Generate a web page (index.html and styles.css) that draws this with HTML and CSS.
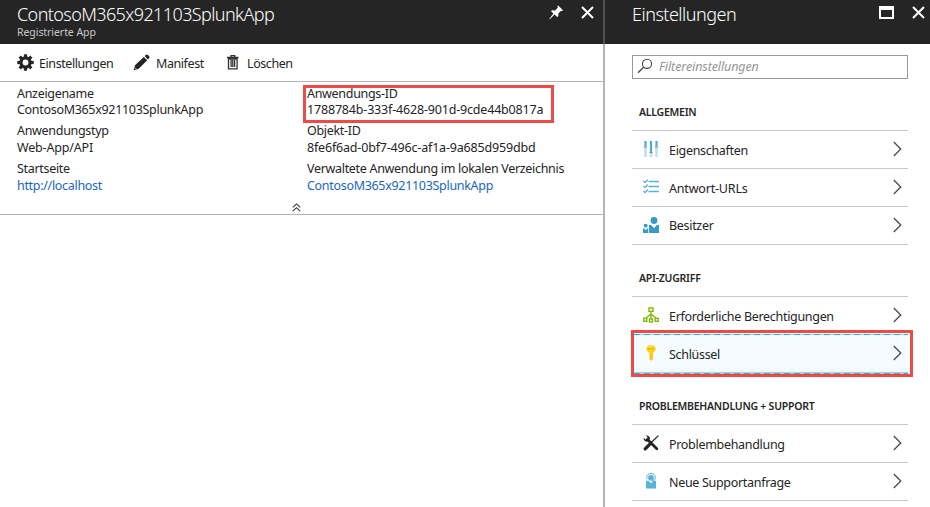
FILE: index.html
```
<!DOCTYPE html>
<html lang="de">
<head>
<meta charset="utf-8">
<title>ContosoM365x921103SplunkApp</title>
<link rel="stylesheet" href="styles.css">
</head>
<body>
<main class="portal">
  <section class="blade app">
    <header class="bar">
      <div class="heading"><h1>ContosoM365x921103SplunkApp</h1><p>Registrierte App</p></div>
      <svg class="pin" width="15" height="15" viewBox="0 0 15 15"><path d="M9.2 0.6 14 5.2 12.7 6.2 12 5.8 9.4 8.5 9.3 11.2 8.2 12 5.5 9.5 0.8 14.2 0.4 13.8 4.4 8.6 2 6.2 3 5.3 6 5.4 8.8 2.7 8.4 1.7Z" fill="#fff"/></svg>
      <svg class="close" width="13" height="13" viewBox="0 0 13 13"><path d="M1 1 12 12M12 1 1 12" stroke="#fff" stroke-width="2"/></svg>
    </header>
    <nav class="tools">
      <a class="t1"><svg width="17" height="17" viewBox="-8.5 -8.5 17 17"><g fill="#252525"><rect x="-1.6" y="-8.2" width="3.2" height="16.4"/><rect x="-1.6" y="-8.2" width="3.2" height="16.4" transform="rotate(45)"/><rect x="-1.6" y="-8.2" width="3.2" height="16.4" transform="rotate(90)"/><rect x="-1.6" y="-8.2" width="3.2" height="16.4" transform="rotate(135)"/><circle r="6.2"/></g><circle r="2.9" fill="#fff"/></svg><span>Einstellungen</span></a>
      <a class="t2"><svg width="17" height="17" viewBox="0 0 17 17"><path d="M.6 16.2 2 11.3 10.8 2.9 14.2 6.2 5.7 14.8ZM11.6 2.1 13.1.7Q14 .1 15 1L16.2 2.2Q16.9 3.1 16.2 4L14.9 5.5Z" fill="#252525"/><path d="M1.8 13.6 3.5 15.3" stroke="#fff" stroke-width=".7"/></svg><span>Manifest</span></a>
      <a class="t3"><svg width="12" height="15" viewBox="0 0 12 15"><path d="M0 2.5H11.5M4 2V.6H7.8V2M1.5 4V13.8H10.1V4ZM4.1 5V12M5.8 5V12M7.6 5V12" fill="none" stroke="#333" stroke-width="1.3"/></svg><span>Löschen</span></a>
    </nav>
    <div class="essentials">
      <dl>
        <div><dt>Anzeigename</dt><dd>ContosoM365x921103SplunkApp</dd></div>
        <div><dt>Anwendungstyp</dt><dd class="loose">Web-App/API</dd></div>
        <div><dt>Startseite</dt><dd><a>http://localhost</a></dd></div>
      </dl>
      <dl>
        <div class="marked"><dt>Anwendungs-ID</dt><dd class="loose">1788784b-333f-4628-901d-9cde44b0817a</dd></div>
        <div><dt>Objekt-ID</dt><dd class="loose">8fe6f6ad-0bf7-496c-af1a-9a685d959dbd</dd></div>
        <div><dt>Verwaltete Anwendung im lokalen Verzeichnis</dt><dd><a>ContosoM365x921103SplunkApp</a></dd></div>
      </dl>
      <svg class="collapse" width="9" height="9" viewBox="0 0 9 9"><path d="M.8 4.3 4.5.9 8.2 4.3M.8 8.1 4.5 4.7 8.2 8.1" fill="none" stroke="#333" stroke-width="1.1"/></svg>
    </div>
  </section>
  <section class="blade settings">
    <header class="bar">
      <div class="heading"><h1>Einstellungen</h1></div>
      <svg class="max" width="15" height="13" viewBox="0 0 15 13"><path d="M0 0H15V13H0ZM2 4V11H13V4Z" fill="#fff" fill-rule="evenodd"/></svg>
      <svg class="close" width="13" height="13" viewBox="0 0 13 13"><path d="M1 1 12 12M12 1 1 12" stroke="#fff" stroke-width="2"/></svg>
    </header>
    <div class="body">
      <div class="filter"><svg width="16" height="16" viewBox="0 0 16 16"><circle cx="10" cy="5.8" r="4.6" fill="none" stroke="#444" stroke-width="1.1"/><path d="M6.6 9.2 1 14.8" stroke="#444" stroke-width="1.3"/></svg><span>Filtereinstellungen</span></div>
      <h2>ALLGEMEIN</h2>
      <ul>
        <li><svg class="icon" width="16" height="16" viewBox="0 0 16 16"><path d="M2.5 0V5M8 0V11M13.5 0V5" stroke="#4fa9d2" stroke-width="2.2"/><path d="M2.5 7V16M8 13V16M13.5 7V16" stroke="#b9e0f0" stroke-width="2.4"/><path d="M.8 6H4.2M6.3 11.7H9.7M11.8 6H15.2" stroke="#666" stroke-width="1.1"/></svg><span>Eigenschaften</span><svg class="chev" width="9" height="16" viewBox="0 0 9 16"><path d="M.8 1 7.8 8 .8 15"/></svg></li>
        <li><svg class="icon" width="16" height="16" viewBox="0 0 16 16"><path d="M5.5 2.5H16M5.5 7.5H16M5.5 12.5H16" stroke="#59b4d9" stroke-width="1.3"/><path d="M.4 2.2 2 3.6 4.8.7M.4 7.2 2 8.6 4.8 5.7M.4 12.2 2 13.6 4.8 10.7" fill="none" stroke="#3999c6" stroke-width="1.1"/></svg><span class="loose">Antwort-URLs</span><svg class="chev" width="9" height="16" viewBox="0 0 9 16"><path d="M.8 1 7.8 8 .8 15"/></svg></li>
        <li class="owner"><svg class="icon" width="16" height="16" viewBox="0 0 16 16"><g fill="#3999c6"><circle cx="11" cy="3.5" r="3.4"/><path d="M6 8H8.2L11 11.2 13.8 8H16V16H6ZM0 11.5H1.3L2.8 13.2 4.2 11.5H5.2V16H0Z"/><circle cx="2.7" cy="8.7" r="1.9"/></g></svg><span>Besitzer</span><svg class="chev" width="9" height="16" viewBox="0 0 9 16"><path d="M.8 1 7.8 8 .8 15"/></svg></li>
      </ul>
      <h2>API-ZUGRIFF</h2>
      <ul>
        <li><svg class="icon" width="16" height="16" viewBox="0 0 16 16"><g fill="none" stroke="#7fba00" stroke-width="1.4"><rect x="6" y=".9" width="4" height="3.4"/><path d="M8 4.5V11.6M7.8 7.2 3.2 10.8M8.2 7.2 12.8 10.8"/><rect x=".8" y="11.3" width="3" height="3"/><rect x="6.5" y="12" width="3" height="3"/><rect x="12.2" y="11.3" width="3" height="3"/></g></svg><span>Erforderliche Berechtigungen</span><svg class="chev" width="9" height="16" viewBox="0 0 9 16"><path d="M.8 1 7.8 8 .8 15"/></svg></li>
        <li class="selected"><svg class="icon" width="16" height="16" viewBox="0 0 16 16"><path d="M4.7.9Q8-.7 11.3.9L12.8 3.4 12.6 5 10 8V14.3L8.2 16 6.4 14.3V8L3.4 5 3.2 3.4Z" fill="#fcd116"/><path d="M5 4H11" stroke="#eba91b" stroke-width="1"/><path d="M8 8V14" stroke="#f3b71b"/><circle cx="8" cy="1.5" r=".7" fill="#fff"/></svg><span class="tight">Schlüssel</span><svg class="chev" width="9" height="16" viewBox="0 0 9 16"><path d="M.8 1 7.8 8 .8 15"/></svg></li>
      </ul>
      <h2>PROBLEMBEHANDLUNG + SUPPORT</h2>
      <ul>
        <li><svg class="icon" width="16" height="16" viewBox="0 0 16 16"><path d="M4.5 4.5 13.8 13.8" stroke="#252525" stroke-width="2.8" stroke-linecap="round"/><path d="M3 .4Q7 .2 7 4L4.5 6.8Q.5 6.7.5 2.8L2.6 4.6 4.7 2.8Z" fill="#252525"/><path d="M15.4.6 7.5 8.3" stroke="#252525" stroke-width="1.3"/><path d="M6.6 9.4 2.2 13.8" stroke="#252525" stroke-width="3.2" stroke-linecap="round"/></svg><span>Problembehandlung</span><svg class="chev" width="9" height="16" viewBox="0 0 9 16"><path d="M.8 1 7.8 8 .8 15"/></svg></li>
        <li><svg class="icon" width="16" height="16" viewBox="0 0 16 16"><path d="M3 7.7H5.5L8 10.2 10.5 7.7H13V15.5H3Z" fill="#59b4d9"/><circle cx="8" cy="4.8" r="2.9" fill="#59b4d9"/><path d="M3.8 6V4.5A4.2 4 0 0 1 12.2 4.5V6Q11.5 8 9 8" fill="none" stroke="#59b4d9" stroke-width="1"/></svg><span>Neue Supportanfrage</span><svg class="chev" width="9" height="16" viewBox="0 0 9 16"><path d="M.8 1 7.8 8 .8 15"/></svg></li>
      </ul>
    </div>
  </section>
</main>
</body>
</html>
```
FILE: styles.css
```
*, *::before, *::after { box-sizing: border-box; margin: 0; padding: 0; }
body { width: 930px; height: 507px; overflow: hidden; background: #fff; color: #252525; font: 12.5px/16px "Noto Sans", "Open Sans", sans-serif; letter-spacing: -.31px; }
svg { display: block; flex: none; }
span, dt, dd, h1, h2, p { white-space: nowrap; }
.loose { letter-spacing: -.18px; }
.portal { display: flex; height: 507px; }
.app { width: 603px; }
.settings { width: 327px; border-left: 2px solid #b4b4b4; }
.bar { display: flex; height: 44px; background: #252525; color: #fff; }
.settings .bar { margin-left: -2px; border-left: 2px solid #505050; }
.heading { flex: 1; padding: 3px 0 0 17px; }
.settings .heading { padding-left: 27px; }
h1 { font-size: 18px; line-height: 22px; font-weight: 300; letter-spacing: -.6px; }
.settings h1 { letter-spacing: -.5px; }
.bar p { font-size: 10.5px; line-height: 14px; color: #c8c8c8; letter-spacing: -.06px; }
.pin { margin: 5px 17px 0 0; }
.app .close { margin: 6px 9px 0 0; }
.max { margin: 6px 18px 0 0; }
.settings .close { margin: 6px 5px 0 0; }
.tools { display: flex; height: 38px; border-bottom: 1px solid #b4b4b4; padding-left: 17px; letter-spacing: -.42px; }
.tools a { display: flex; align-items: center; }
.tools span { padding-top: 2px; }
.t1 { gap: 5px; width: 116px; }
.t2 { gap: 6px; width: 94px; }
.t3 { gap: 8px; }
.essentials { position: relative; display: flex; height: 133px; border-bottom: 1px solid #b4b4b4; padding: 4px 0 0 17px; }
dl { width: 290px; }
dl > div { height: 37px; }
dl > div + div { height: 38px; }
dl > div + div dd { margin-top: 1px; }
dd a { color: #1a66bd; }
.marked { position: relative; }
.marked::after { content: ""; position: absolute; left: -4px; top: -1px; width: 251px; height: 38px; border: 3px solid #ec4c47; }
.collapse { position: absolute; left: 292px; top: 121px; }
.body { padding: 11px 22px 0 27px; }
.filter { display: flex; align-items: center; height: 24px; border: 1px solid #999; padding-left: 4px; gap: 6px; color: #949494; font-style: italic; letter-spacing: -.1px; }
.filter svg { margin-top: -2px; }
h2 { font-size: 10.5px; line-height: 16px; font-weight: 600; letter-spacing: -.24px; height: 51px; padding: 25px 0 0 7px; }
ul { list-style: none; border-top: 1px solid #c8c8c8; }
li { display: flex; align-items: center; height: 38px; border-bottom: 1px solid #c8c8c8; padding: 0 6px 0 11px; }
.icon { margin: -1px 10px 0 0; }
li span { flex: 1; padding-top: 2px; }
li.owner span { padding-top: 0; }
.chev { margin-top: -2px; }
.chev path { fill: none; stroke: #444; stroke-width: 1.2; }
.selected { position: relative; background: #f4fcff; }
.selected::before { content: ""; position: absolute; left: 2px; right: 0; top: -1px; bottom: -2px; background: repeating-linear-gradient(90deg, #1bb4e8 0 6px, #c8c8c8 6px 10px) 0 0 / 100% 1px no-repeat, repeating-linear-gradient(90deg, #1bb4e8 0 6px, #c8c8c8 6px 10px) 0 100% / 100% 1px no-repeat; }
.selected::after { content: ""; position: absolute; left: -1px; top: -5px; width: 282px; height: 47px; border: 3px solid #ec4c47; }
```
